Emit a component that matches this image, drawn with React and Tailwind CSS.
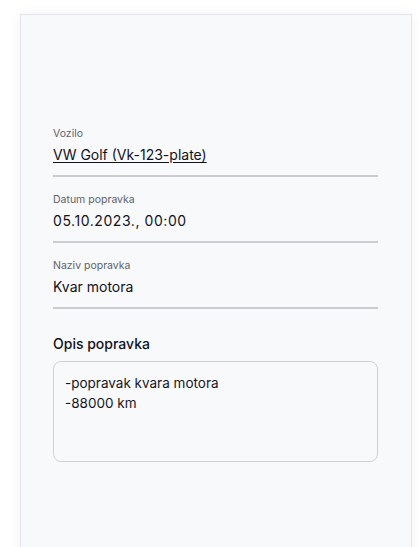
export default function App() {
  const fields = [
    { label: "Vozilo", value: "VW Golf (Vk-123-plate)", link: true },
    { label: "Datum popravka", value: "05.10.2023., 00:00", wide: true },
    { label: "Naziv popravka", value: "Kvar motora" },
  ];

  return (
    <div className="min-h-screen bg-white pt-[14px] pl-[20px] pr-[6px] overflow-hidden" style={{ fontFamily: "Inter, 'Noto Sans', sans-serif" }}>
      <div className="min-h-[560px] bg-[#f8f9fb] border border-[#e3e5e8] shadow-[0_0_12px_rgba(0,0,0,0.06)] pl-[32px] pr-[33px] pt-[111px]">
        {fields.map((f, i) => (
          <div key={f.label} className={"border-b-2 border-[#cbcdd3] pb-[10px] " + (i > 0 ? "mt-[15px]" : "")}>
            <div className="text-[10.5px] leading-[16px] text-[#5f6368]">{f.label}</div>
            <div
              className={
                "mt-[3px] text-[14px] leading-[20px] text-[#111318] " +
                (f.link ? "underline underline-offset-2" : "") +
                (f.wide ? " tracking-[0.04em]" : "")
              }
            >
              {f.value}
            </div>
          </div>
        ))}

        <div className="mt-[25px] text-[14px] leading-[20px] font-medium text-[#111318]">Opis popravka</div>
        <textarea
          readOnly
          className="mt-[7px] block w-full h-[101px] resize-none rounded-[8px] border border-[#cfd1d6] bg-transparent px-[11px] pt-[11px] text-[13.5px] leading-[20px] text-[#16181d] outline-none"
          defaultValue={"-popravak kvara motora\n-88000 km"}
        />
      </div>
    </div>
  );
}
